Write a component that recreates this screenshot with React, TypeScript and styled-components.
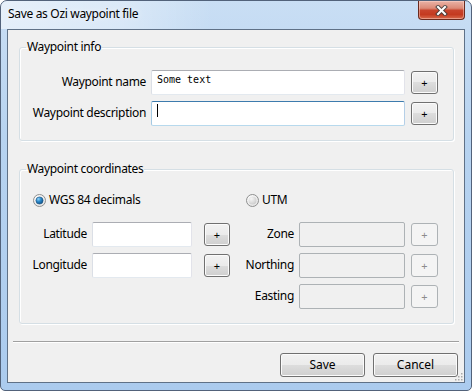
import React from "react";
import styled, { createGlobalStyle } from "styled-components";

const Global = createGlobalStyle`
  html, body { margin: 0; padding: 0; background: #ffffff; }
  body {
    font-family: "Noto Sans", "Open Sans", sans-serif;
    font-size: 12px;
    color: #000;
    letter-spacing: -0.32px;
  }
  * { box-sizing: border-box; }
`;

const Window = styled.div`
  width: 472px;
  height: 391px;
  border: 1px solid #52627a;
  border-radius: 7px 7px 5px 5px;
  background: linear-gradient(to bottom, #c9def4 0%, #b7d3f0 35%, #abcbee 100%);
  padding: 0 6px 7px 6px;
  display: flex;
  flex-direction: column;
  overflow: hidden;
`;

const TitleBar = styled.div`
  height: 28px;
  display: flex;
  justify-content: space-between;
  align-items: flex-start;
  flex-shrink: 0;
  background: linear-gradient(to right, rgba(255, 255, 255, 0.55) 0%, rgba(255, 255, 255, 0.35) 25%, rgba(255, 255, 255, 0) 45%);
  margin: 0 -6px;
  padding: 0 6px;
`;

const Title = styled.div`
  margin-top: 5px;
  padding-left: 1px;
  line-height: 16px;
  font-size: 12px;
  color: #000;
  text-shadow: 0 0 6px rgba(255, 255, 255, 0.9);
`;

const CloseButton = styled.div`
  width: 47px;
  height: 20px;
  margin-top: -1px;
  border: 1px solid #6a2a1e;
  border-top-color: #8a3a2c;
  border-radius: 0 0 4px 4px;
  background: linear-gradient(
    to bottom,
    #eab3a6 0%,
    #dc8a77 40%,
    #c8442c 52%,
    #c43a20 75%,
    #d86a4c 100%
  );
  box-shadow: inset 0 0 0 1px rgba(255, 220, 210, 0.45);
  display: flex;
  align-items: center;
  justify-content: center;
`;

const Client = styled.div`
  flex: 1;
  position: relative;
  background: #f0f0f0;
  border: 1px solid #5f7187;
  display: flex;
  flex-direction: column;
`;

const Body = styled.div`
  padding: 9px 10px 0 11px;
  display: flex;
  flex-direction: column;
  gap: 20px;
`;

const GroupBox = styled.fieldset`
  margin: 0;
  min-width: 0;
  padding: 15px 14px 14px 13px;
  border: 1px solid #d5dfe5;
  border-radius: 3px;
  box-shadow: inset 1px 1px 0 #ffffff, 1px 1px 0 #ffffff;
`;

const Legend = styled.legend`
  padding: 0 1px;
  margin-left: -7px;
  line-height: 16px;
  font-size: 12px;
`;

const FormGrid = styled.div<{ $cols: string }>`
  display: grid;
  grid-template-columns: ${(p) => p.$cols};
  grid-auto-rows: 25px;
  column-gap: 5px;
  row-gap: 6px;
  align-items: center;
`;

const Label = styled.div`
  justify-self: end;
  white-space: nowrap;
  line-height: 16px;
  margin-top: -2px;
`;

const TextBox = styled.div<{ $state?: "normal" | "focus" | "disabled" }>`
  height: 25px;
  border: 1px solid;
  border-radius: 2px;
  padding: 3px 5px 0 5px;
  font-family: "DejaVu Sans Mono", "Liberation Mono", monospace;
  font-size: 10px;
  line-height: 12px;
  letter-spacing: 0;
  white-space: pre;
  overflow: hidden;
  ${(p) =>
    p.$state === "focus"
      ? `border-color: #3d7bad #b5cfe7 #b7d9ed #a4c9e3; background: #ffffff;`
      : p.$state === "disabled"
      ? `border-color: #adb2b5; background: #f0f0f0;`
      : `border-color: #abadb3 #e2e3ea #e3e9ef #dbdfe6; background: #ffffff;`}
`;

const Caret = styled.span`
  display: block;
  width: 1px;
  height: 13px;
  margin-top: -1px;
  background: #000;
`;

const Button = styled.div<{ $disabled?: boolean; $w: number }>`
  justify-self: end;
  width: ${(p) => p.$w}px;
  height: 24px;
  border: 1px solid ${(p) => (p.$disabled ? "#adb2b5" : "#707070")};
  border-radius: 3px;
  background: ${(p) =>
    p.$disabled
      ? "#f4f4f4"
      : "linear-gradient(to bottom, #f2f2f2 0%, #ebebeb 50%, #dddddd 50%, #cfcfcf 100%)"};
  box-shadow: ${(p) => (p.$disabled ? "none" : "inset 0 0 0 1px #fbfbfb")};
  color: ${(p) => (p.$disabled ? "#8c8c8c" : "#000")};
  display: flex;
  align-items: center;
  justify-content: center;
  font-size: 12px;
  line-height: 16px;
  letter-spacing: 0;
`;

const PlusButton = styled(Button)`
  height: 23px;
  font-size: 11px;
  padding-top: 1px;
`;

const CoordColumns = styled.div`
  display: grid;
  grid-template-columns: 213px 1fr;
`;

const CoordColumn = styled.div`
  display: flex;
  flex-direction: column;
  gap: 14px;
`;

const RadioRow = styled.div`
  height: 16px;
  display: flex;
  align-items: center;
  gap: 3px;
  line-height: 16px;
`;

const Separator = styled.div`
  margin: 17px 5px 0 5px;
  height: 2px;
  border-top: 1px solid #a0a0a0;
  border-bottom: 1px solid #ffffff;
`;

const Footer = styled.div`
  margin-top: auto;
  padding: 0 6px 5px 0;
  display: flex;
  justify-content: flex-end;
  gap: 8px;
`;

const Grip = styled.svg`
  position: absolute;
  right: 1px;
  bottom: 1px;
`;

function Radio({ checked }: { checked: boolean }) {
  return (
    <svg width="13" height="13" viewBox="0 0 13 13">
      <defs>
        <radialGradient id={checked ? "rg-on-bg" : "rg-off-bg"} cx="0.35" cy="0.3" r="0.8">
          <stop offset="0" stopColor="#ffffff" />
          <stop offset="1" stopColor="#e2e2e2" />
        </radialGradient>
        <radialGradient id="rg-dot" cx="0.35" cy="0.3" r="0.8">
          <stop offset="0" stopColor="#8fd4fb" />
          <stop offset="0.45" stopColor="#2a87c8" />
          <stop offset="1" stopColor="#0b4a80" />
        </radialGradient>
        <radialGradient id="rg-off" cx="0.35" cy="0.3" r="0.8">
          <stop offset="0" stopColor="#f6f6f6" />
          <stop offset="1" stopColor="#c9c9c9" />
        </radialGradient>
      </defs>
      <circle cx="6.5" cy="6.5" r="6" fill={`url(#${checked ? "rg-on-bg" : "rg-off-bg"})`} stroke="#8e8f8f" strokeWidth="1" />
      {checked ? (
        <circle cx="6.5" cy="6.5" r="3.6" fill="url(#rg-dot)" stroke="#1b4f7c" strokeWidth="0.6" />
      ) : (
        <circle cx="6.5" cy="6.5" r="4" fill="url(#rg-off)" />
      )}
    </svg>
  );
}

function CloseIcon() {
  return (
    <svg width="13" height="11" viewBox="0 0 13 11">
      <path d="M3 2 L10 9 M10 2 L3 9" stroke="#3c3c3c" strokeOpacity="0.85" strokeWidth="4" strokeLinecap="square" fill="none" />
      <path d="M3 2 L10 9 M10 2 L3 9" stroke="#ffffff" strokeWidth="2" strokeLinecap="square" fill="none" />
    </svg>
  );
}

export default function App() {
  return (
    <>
      <Global />
      <Window>
        <TitleBar>
          <Title>Save as Ozi waypoint file</Title>
          <CloseButton>
            <CloseIcon />
          </CloseButton>
        </TitleBar>
        <Client>
          <Body>
            <GroupBox>
              <Legend>Waypoint info</Legend>
              <FormGrid $cols="113px 254px 28px">
                <Label>Waypoint name</Label>
                <TextBox>Some text</TextBox>
                <PlusButton $w={27}>+</PlusButton>
                <Label>Waypoint description</Label>
                <TextBox $state="focus">
                  <Caret />
                </TextBox>
                <PlusButton $w={27}>+</PlusButton>
              </FormGrid>
            </GroupBox>
            <GroupBox>
              <Legend>Waypoint coordinates</Legend>
              <CoordColumns>
                <CoordColumn>
                  <RadioRow>
                    <Radio checked />
                    <span>WGS 84 decimals</span>
                  </RadioRow>
                  <FormGrid $cols="54px 100px 33px">
                    <Label>Latitude</Label>
                    <TextBox />
                    <PlusButton $w={26}>+</PlusButton>
                    <Label>Longitude</Label>
                    <TextBox />
                    <PlusButton $w={26}>+</PlusButton>
                  </FormGrid>
                </CoordColumn>
                <CoordColumn>
                  <RadioRow>
                    <Radio checked={false} />
                    <span>UTM</span>
                  </RadioRow>
                  <FormGrid $cols="48px 106px 28px">
                    <Label>Zone</Label>
                    <TextBox $state="disabled" />
                    <PlusButton $w={27} $disabled>+</PlusButton>
                    <Label>Northing</Label>
                    <TextBox $state="disabled" />
                    <PlusButton $w={27} $disabled>+</PlusButton>
                    <Label>Easting</Label>
                    <TextBox $state="disabled" />
                    <PlusButton $w={27} $disabled>+</PlusButton>
                  </FormGrid>
                </CoordColumn>
              </CoordColumns>
            </GroupBox>
          </Body>
          <Separator />
          <Footer>
            <Button $w={85}>Save</Button>
            <Button $w={85}>Cancel</Button>
          </Footer>
          <Grip width="9" height="9" viewBox="0 0 9 9">
            {[
              [7, 1], [4, 4], [7, 4], [1, 7], [4, 7], [7, 7],
            ].map(([x, y], i) => (
              <rect key={i} x={x} y={y} width="1.5" height="1.5" fill="#a9a9a9" />
            ))}
          </Grip>
        </Client>
      </Window>
    </>
  );
}
